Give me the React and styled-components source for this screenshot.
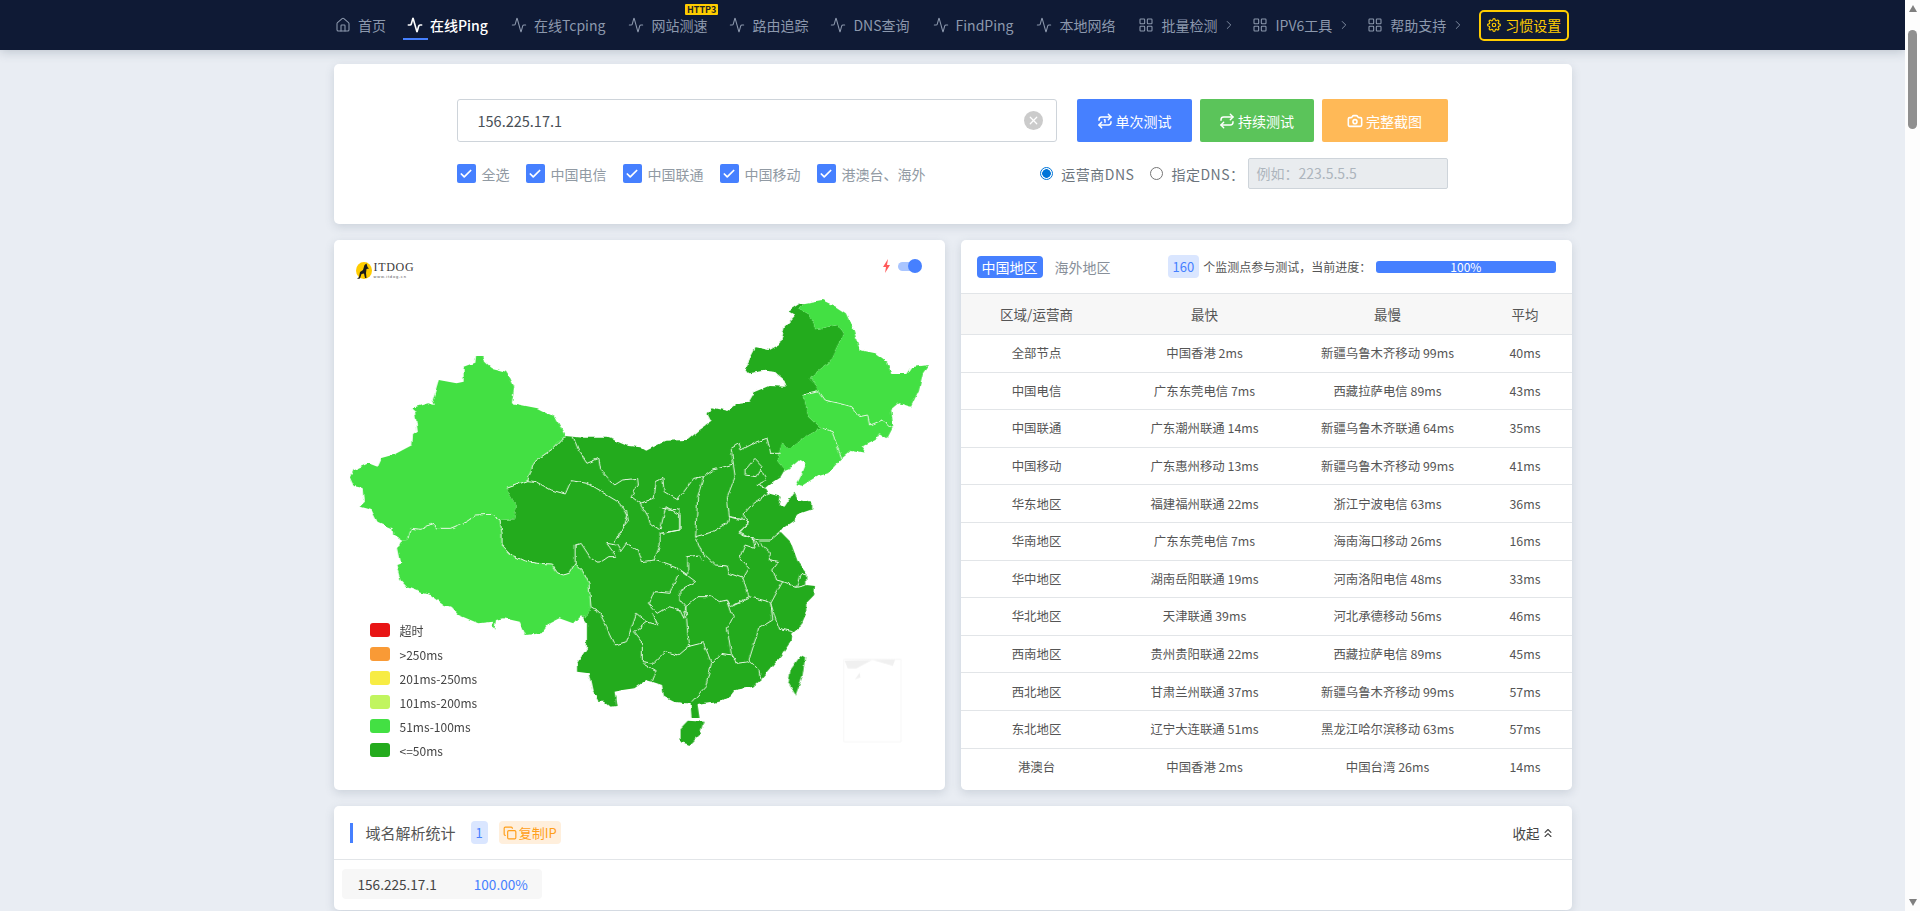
import React from 'react';
import styled, { createGlobalStyle } from 'styled-components';
import {
  Home, Activity, LayoutGrid, ChevronRight, Repeat, Repeat1, Camera, Check, Copy, ChevronsUp, X,
} from 'lucide-react';
import { FiSettings } from 'react-icons/fi';

const GlobalStyle = createGlobalStyle`
  html, body { margin: 0; height: 100%; overflow: hidden; }
  body {
    font-family: "Noto Sans CJK SC", "Noto Sans", sans-serif;
    background: #e9edf3;
    color: #555;
  }
  #root { height: 100%; }
`;

const Shell = styled.div`
  display: flex;
  height: 911px;
  overflow: hidden;
`;

const Page = styled.div`
  flex: 1;
  min-width: 0;
  overflow: hidden;
`;

const ScrollRail = styled.div`
  width: 15px;
  background: #fdfdfd;
  display: flex;
  flex-direction: column;
  align-items: center;
  justify-content: space-between;
  padding: 5px 0;
  box-sizing: border-box;
`;

const ScrollTrack = styled.div`
  flex: 1;
  width: 100%;
  padding-top: 18px;
  box-sizing: border-box;
  display: flex;
  justify-content: center;
`;

const ScrollThumb = styled.div`
  width: 9px;
  height: 99px;
  border-radius: 5px;
  background: #8f8f8f;
`;

const ScrollArrow = styled.div`
  width: 0;
  height: 0;
  border-left: 4.5px solid transparent;
  border-right: 4.5px solid transparent;
  ${({ $down }) => ($down ? 'border-top: 7px solid #7f7f7f;' : 'border-bottom: 7px solid #7f7f7f;')}
`;

const Nav = styled.nav`
  height: 50px;
  background: #0f1a35;
  box-shadow: 0 2px 10px rgba(60, 80, 100, .25);
  display: flex;
  align-items: center;
  padding-left: 335px;
  box-sizing: border-box;
`;

const NavItem = styled.div`
  position: relative;
  display: flex;
  align-items: center;
  gap: 7px;
  height: 50px;
  margin-right: ${({ $after }) => $after}px;
  font-size: 14px;
  white-space: nowrap;
  color: ${({ $active }) => ($active ? '#fff' : '#8c98ad')};
  font-weight: ${({ $active }) => ($active ? 500 : 400)};
  ${({ $active }) => $active && `
    &::after {
      content: '';
      position: absolute;
      left: -4px;
      top: 38px;
      width: 25px;
      height: 2px;
      background: #4680ff;
    }
  `}
`;

const HotTag = styled.span`
  position: absolute;
  top: 4px;
  right: -11px;
  height: 11px;
  padding: 0 2px;
  background: #ffcc00;
  color: #222;
  font-size: 9px;
  line-height: 11px;
  font-weight: 700;
  border-radius: 1px;
`;

const MoreArrow = styled(ChevronRight)`
  margin-left: -2px;
`;

const PrefButton = styled.div`
  display: flex;
  align-items: center;
  gap: 4px;
  width: 90px;
  height: 31px;
  box-sizing: border-box;
  justify-content: center;
  border: 2px solid #ffcc00;
  border-radius: 5px;
  color: #ffcc00;
  font-size: 14px;
`;

const Container = styled.main`
  width: 1238px;
  margin: 14px auto 0;
  display: flex;
  flex-direction: column;
  gap: 16px;
`;

const Card = styled.section`
  position: relative;
  background: #fff;
  border-radius: 5px;
  box-shadow: 0 3px 10px rgba(70, 90, 110, .18);
  overflow: hidden;
`;

const SearchCard = styled(Card)`
  height: 160px;
  padding: 35px 124px 0 123px;
  box-sizing: border-box;
  display: flex;
  flex-direction: column;
  gap: 16px;
`;

const SearchRow = styled.div`
  display: flex;
  align-items: center;
`;

const TargetBox = styled.div`
  width: 600px;
  height: 43px;
  box-sizing: border-box;
  border: 1px solid #ced4da;
  border-radius: 3px;
  margin-right: 20px;
  padding: 0 13px 0 20px;
  display: flex;
  align-items: center;
  justify-content: space-between;
  font-size: 14.5px;
  color: #495057;
`;

const ClearDot = styled.span`
  width: 19px;
  height: 19px;
  border-radius: 50%;
  background: #cbcbcb;
  color: #fff;
  display: flex;
  align-items: center;
  justify-content: center;
`;

const ActionButton = styled.div`
  width: ${({ $w }) => $w}px;
  height: 43px;
  margin-right: 8px;
  border-radius: 2px;
  background: ${({ $bg }) => $bg};
  color: #fff;
  font-size: 14px;
  display: flex;
  align-items: center;
  justify-content: center;
  gap: 3px;
  &:last-child { margin-right: 0; }
`;

const OptionRow = styled.div`
  display: flex;
  align-items: center;
  height: 31px;
`;

const CheckList = styled.div`
  display: flex;
  align-items: center;
  margin-right: auto;
`;

const CheckItem = styled.label`
  display: flex;
  align-items: center;
  gap: 6px;
  margin-right: 16px;
  font-size: 14px;
  color: #919aa3;
`;

const CheckMark = styled.span`
  width: 19px;
  height: 19px;
  border-radius: 2px;
  background: #4680ff;
  color: #fff;
  display: flex;
  align-items: center;
  justify-content: center;
`;

const RadioItem = styled.label`
  display: flex;
  align-items: center;
  gap: 8px;
  margin-right: ${({ $last }) => ($last ? 3 : 16)}px;
  font-size: 14px;
  letter-spacing: .5px;
  color: #6c757d;
  white-space: nowrap;
`;

const RadioDot = styled.span`
  width: 13px;
  height: 13px;
  box-sizing: border-box;
  border-radius: 50%;
  border: 1px solid ${({ $on }) => ($on ? '#0075d9' : '#767676')};
  background: ${({ $on }) => ($on ? 'radial-gradient(circle, #0075d9 0 4px, #fff 4.6px)' : '#fff')};
`;

const DnsInput = styled.div`
  width: 200px;
  height: 31px;
  box-sizing: border-box;
  border: 1px solid #ced4da;
  border-radius: 2px;
  background: #e9ecef;
  color: #adb5bd;
  font-size: 14px;
  line-height: 29px;
  padding-left: 8px;
`;

const Columns = styled.div`
  display: grid;
  grid-template-columns: 611px 611px;
  gap: 16px;
`;

const MapCard = styled(Card)`
  height: 550px;
`;

const MapSvg = styled.svg`
  display: block;
  width: 611px;
  height: 550px;
`;

const Logo = styled.div`
  position: absolute;
  left: 22px;
  top: 21px;
  display: flex;
  align-items: center;
  gap: 1px;
`;

const LogoText = styled.div`
  font-family: "Liberation Serif", serif;
  color: #3a3a3a;
  line-height: 1;
  font-size: 12px;
  letter-spacing: .7px;
`;

const LogoSub = styled.div`
  font-family: "Liberation Sans", sans-serif;
  font-size: 4px;
  letter-spacing: .8px;
  color: #555;
  margin-top: 1px;
`;

const SpeedSwitch = styled.div`
  position: absolute;
  right: 24px;
  top: 19px;
  display: flex;
  align-items: center;
  gap: 7px;
`;

const SwitchTrack = styled.div`
  position: relative;
  width: 23px;
  height: 9px;
  border-radius: 5px;
  background: #a9c5ff;
  &::after {
    content: '';
    position: absolute;
    right: -1px;
    top: -3px;
    width: 14px;
    height: 14px;
    border-radius: 50%;
    background: #4680ff;
  }
`;

const Legend = styled.ul`
  position: absolute;
  left: 36px;
  top: 378px;
  margin: 0;
  padding: 0;
  list-style: none;
  display: flex;
  flex-direction: column;
`;

const LegendItem = styled.li`
  display: flex;
  align-items: center;
  gap: 10px;
  height: 24px;
  font-size: 12px;
  color: #444;
`;

const Swatch = styled.span`
  width: 20px;
  height: 14px;
  border-radius: 3px;
  background: ${({ $color }) => $color};
`;

const StatsCard = styled(Card)`
  height: 550px;
`;

const StatsTop = styled.div`
  height: 54px;
  box-sizing: border-box;
  padding: 0 16px;
  display: flex;
  align-items: center;
  border-bottom: 1px solid #e2e5e8;
`;

const AreaTab = styled.span`
  height: 22px;
  line-height: 22px;
  padding: 0 5px;
  margin-right: 7px;
  border-radius: 4px;
  font-size: 14px;
  background: ${({ $active }) => ($active ? '#4680ff' : 'transparent')};
  color: ${({ $active }) => ($active ? '#fff' : '#888f99')};
`;

const CountBadge = styled.span`
  height: 23px;
  line-height: 23px;
  padding: 0 5px;
  margin-left: ${({ $offset }) => $offset || 0}px;
  border-radius: 4px;
  background: #dae6ff;
  color: #4680ff;
  font-size: 13px;
`;

const ProgressText = styled.span`
  font-size: 12px;
  color: #555;
  margin: 0 5px 0 4px;
  white-space: nowrap;
`;

const ProgressBar = styled.div`
  flex: 1;
  height: 12px;
  line-height: 12px;
  background: #4680ff;
  border-radius: 3px;
  color: #fff;
  font-size: 12px;
  text-align: center;
`;

const StatsRow = styled.div`
  display: grid;
  grid-template-columns: 152px 184px 182px 93px;
  align-items: center;
  height: ${({ $head }) => ($head ? 41 : 37.6)}px;
  box-sizing: border-box;
  border-bottom: 1px solid #e2e5e8;
  background: ${({ $head }) => ($head ? '#f7f7f7' : '#fff')};
  font-size: ${({ $head }) => ($head ? 13.5 : 12.4)}px;
  color: #555;
  text-align: center;
  white-space: nowrap;
  &:last-child { border-bottom: 0; }
`;

const ResolveCard = styled(Card)`
  height: 104px;
`;

const ResolveHead = styled.div`
  height: 54px;
  box-sizing: border-box;
  padding: 0 16px;
  border-bottom: 1px solid #e2e5e8;
  display: flex;
  align-items: center;
`;

const ResolveTitle = styled.h5`
  margin: 0 15px 0 0;
  padding-left: 13px;
  height: 20px;
  line-height: 20px;
  border-left: 3px solid #4680ff;
  font-size: 15px;
  font-weight: 400;
  color: #555;
`;

const CopyTag = styled.span`
  margin-left: 11px;
  height: 23px;
  padding: 0 4px;
  border-radius: 4px;
  background: #ffefdc;
  color: #ff9f1a;
  font-size: 13px;
  display: flex;
  align-items: center;
  gap: 2px;
`;

const Collapse = styled.span`
  margin-left: auto;
  font-size: 13.5px;
  color: #444;
  display: flex;
  align-items: center;
  gap: 1px;
  margin-right: 1px;
`;

const IpPill = styled.div`
  width: 200px;
  height: 30px;
  margin: 9px 0 0 8px;
  padding-left: 16px;
  box-sizing: border-box;
  background: #f7f7f7;
  border-radius: 4px;
  display: flex;
  align-items: center;
  font-size: 13.6px;
  color: #444;
`;

const IpRate = styled.span`
  margin-left: 37px;
  color: #4680ff;
`;

const navItems = [
  { label: '首页', icon: Home, after: 21 },
  { label: '在线Ping', icon: Activity, active: true, after: 23 },
  { label: '在线Tcping', icon: Activity, after: 23 },
  { label: '网站测速', icon: Activity, hot: true, after: 22 },
  { label: '路由追踪', icon: Activity, after: 22 },
  { label: 'DNS查询', icon: Activity, after: 23 },
  { label: 'FindPing', icon: Activity, after: 23 },
  { label: '本地网络', icon: Activity, after: 23 },
  { label: '批量检测', icon: LayoutGrid, more: true, after: 16 },
  { label: 'IPV6工具', icon: LayoutGrid, more: true, after: 16 },
  { label: '帮助支持', icon: LayoutGrid, more: true, after: 14 },
];

const legend = [
  ['超时', '#e81515'],
  ['>250ms', '#f99a36'],
  ['201ms-250ms', '#f7ec44'],
  ['101ms-200ms', '#c1f55f'],
  ['51ms-100ms', '#43e043'],
  ['<=50ms', '#23ab1d'],
];

const rows = [
  ['全部节点', '中国香港 2ms', '新疆乌鲁木齐移动 99ms', '40ms'],
  ['中国电信', '广东东莞电信 7ms', '西藏拉萨电信 89ms', '43ms'],
  ['中国联通', '广东潮州联通 14ms', '新疆乌鲁木齐联通 64ms', '35ms'],
  ['中国移动', '广东惠州移动 13ms', '新疆乌鲁木齐移动 99ms', '41ms'],
  ['华东地区', '福建福州联通 22ms', '浙江宁波电信 63ms', '36ms'],
  ['华南地区', '广东东莞电信 7ms', '海南海口移动 26ms', '16ms'],
  ['华中地区', '湖南岳阳联通 19ms', '河南洛阳电信 48ms', '33ms'],
  ['华北地区', '天津联通 39ms', '河北承德移动 56ms', '46ms'],
  ['西南地区', '贵州贵阳联通 22ms', '西藏拉萨电信 89ms', '45ms'],
  ['西北地区', '甘肃兰州联通 37ms', '新疆乌鲁木齐移动 99ms', '57ms'],
  ['东北地区', '辽宁大连联通 51ms', '黑龙江哈尔滨移动 63ms', '57ms'],
  ['港澳台', '中国香港 2ms', '中国台湾 26ms', '14ms'],
];

const XINJIANG = '367,348 388,348 392,365 410,385 445,395 456,415 466,440 460,490 525,505 570,532 595,588 585,600 565,625 535,650 515,668 500,722 447,745 458,770 472,800 465,838 430,840 410,823 370,825 345,845 305,865 270,865 260,850 230,868 205,865 195,900 182,902 160,885 158,865 120,845 105,810 75,800 88,785 85,745 60,738 50,712 60,690 97,670 120,680 130,655 160,645 208,615 210,585 222,575 215,515 205,505 248,490 265,495 260,480 275,420 320,430 338,425 338,380 365,368';
const TIBET = '430,840 435,880 435,915 460,945 490,962 525,970 560,972 575,998 590,1005 605,1000 620,970 640,995 655,1030 660,1100 648,1135 635,1125 615,1150 580,1135 555,1150 535,1180 495,1185 480,1145 440,1135 420,1140 415,1170 410,1145 375,1150 345,1135 325,1125 305,1100 290,1095 255,1065 235,1060 195,1042 178,1020 168,975 180,970 172,925 182,902 195,900 205,865 230,868 260,850 270,865 305,865 345,845 370,825 410,823';
const NORTHEAST = '1198,190 1245,180 1280,200 1305,220 1325,270 1340,330 1380,340 1410,365 1420,402 1458,402 1470,382 1515,375 1500,400 1490,450 1470,500 1440,490 1420,510 1425,560 1410,595 1390,580 1380,600 1345,620 1355,638 1320,630 1295,655 1260,700 1230,710 1190,740 1180,735 1195,700 1205,670 1190,660 1170,680 1150,690 1130,660 1145,605 1160,628 1190,600 1240,565 1210,530 1198,465 1225,460 1232,440 1215,412 1262,372 1270,350 1300,280 1285,255 1228,268 1215,225 1185,205';
const MAINLAND = '595,588 640,593 700,593 730,605 755,618 785,622 800,632 850,602 905,600 935,570 965,545 955,522 965,502 1005,513 1030,490 1060,485 1075,455 1110,438 1155,440 1150,420 1125,395 1100,392 1060,400 1050,385 1078,322 1110,330 1140,310 1150,260 1178,225 1160,212 1190,190 1198,190 1185,205 1215,225 1228,268 1285,255 1300,280 1270,350 1262,372 1215,412 1232,440 1225,460 1198,465 1210,530 1240,565 1190,600 1160,628 1145,605 1130,660 1150,690 1140,710 1115,730 1100,745 1108,760 1140,770 1135,795 1150,800 1175,755 1185,780 1220,788 1220,808 1190,820 1175,840 1150,860 1140,875 1165,905 1185,970 1205,1000 1205,1035 1227,1038 1225,1065 1205,1090 1205,1120 1190,1160 1170,1180 1168,1200 1140,1250 1090,1320 1070,1340 1025,1350 1010,1370 985,1385 945,1392 930,1395 935,1435 915,1435 912,1390 900,1390 870,1385 845,1370 840,1335 815,1325 800,1320 770,1345 740,1350 720,1355 725,1398 710,1400 695,1385 680,1385 665,1355 655,1300 625,1295 625,1270 650,1225 650,1150 635,1125 648,1135 660,1100 655,1030 640,995 620,970 605,1000 590,1005 575,998 560,972 525,970 490,962 460,945 435,915 435,880 430,840 465,838 472,800 458,770 447,745 500,722 515,668 535,650 565,625 585,600';
const TAIWAN = '1190,1248 1202,1255 1195,1310 1178,1365 1160,1330 1165,1290';
const HAINAN = '905,1442 945,1445 935,1485 910,1515 887,1505 887,1465';

const BORDERS_UPPER = [
  '1198,465 1235,455 1250,480 1290,490 1320,500 1340,530 1360,525 1365,555 1395,540 1425,565',
  '1245,565 1270,575 1290,640 1295,655',
  '615,590 630,635 650,670 680,655 685,690 700,710 720,735 740,720 778,715 780,735 762,770 785,790 820,775 825,725 842,715 845,755 880,780 920,715 945,710 970,690 1020,672 1015,625 1035,610 1040,630 1080,605 1105,595 1115,640 1140,640',
  '500,722 520,725 560,750 595,762 610,722 650,730 700,765 735,790 752,830 745,855 728,895',
  '785,790 805,830 810,850 835,870 850,800 885,825 885,870 840,880',
  '945,710 930,770 925,890',
  '1020,672 1025,710 1005,770 1010,830 1045,835',
  '1050,690 1075,655 1095,680 1080,710 1050,705 1050,690',
  '1090,690 1105,720 1080,735 1100,745',
  '1108,760 1070,790 1045,825 1060,850 1035,875 1070,895 1085,900 1115,900 1140,875',
  '447,745 500,722 515,668 535,650 565,625 585,600 595,588',
  '200,895 205,865 230,868 260,850 270,865 305,865 345,845 370,825 410,823 430,840 435,880 435,915 460,945 490,962 525,970 560,972 575,998 590,1005 605,1000 620,970 640,995 655,1030 660,1100',
];

const BORDERS_LOWER = [
  '620,190 620,135 635,130 660,175 680,190 705,170 725,170 700,130 725,135 735,155 750,130 780,150 790,185 820,180 880,205',
  '820,180 835,135 835,100 885,90 885,30 838,25',
  '750,30 755,65 730,100 720,130',
  '925,110 940,155 975,195 1005,198 1010,220 1045,235 1060,290 1020,315',
  '925,110 970,95 1005,70 1010,50 1060,65 1035,100 1070,115 1085,140',
  '1070,115 1075,145 1050,135 1035,175 1060,205 1045,235',
  '1085,125 1110,155 1115,180 1135,185 1120,210 1130,240 1145,245',
  '1145,245 1115,310 1125,350 1135,385 1170,395',
  '1060,290 1110,305 1115,310',
  '1145,245 1180,262 1205,255',
  '1180,262 1190,220 1205,225',
  '880,205 925,245 885,270 885,300 900,320 930,290 965,290 985,305 1005,300 1015,320 1060,295',
  '880,205 905,225 905,170 935,165 945,185',
  '880,225 860,280 820,275 808,310 830,340 858,320 885,330 895,355 900,320',
  '660,320 680,335 700,380 722,435 750,425 775,340 800,365 830,375 815,340',
  '805,365 770,395 790,425 790,485 820,490 850,455 880,465 905,440 945,428 965,490',
  '900,320 905,400 910,440',
  '1005,300 1020,350 1005,385 1015,460 1030,490 1060,485',
  '965,490 950,560 915,605',
  '965,490 990,460 1015,465 1030,490',
  '1115,310 1120,360 1085,385 1060,480 1085,510 1090,540',
  '790,490 825,515 815,545',
];

const ChinaMap = () => (
  <MapSvg viewBox="10 0 1546 1650" preserveAspectRatio="none">
    <defs>
      <filter id="roughEdge" filterUnits="userSpaceOnUse" x="10" y="0" width="1546" height="1650" colorInterpolationFilters="sRGB">
        <feTurbulence type="fractalNoise" baseFrequency="0.05" numOctaves="2" seed="4" />
        <feDisplacementMap in="SourceGraphic" scale="11" xChannelSelector="R" yChannelSelector="G" />
      </filter>
    </defs>
    <g filter="url(#roughEdge)">
      <polygon points={MAINLAND} fill="#23ab1d" />
      <g fill="#43e043">
        <polygon points={XINJIANG} />
        <polygon points={TIBET} />
        <polygon points={NORTHEAST} />
      </g>
      <g fill="none" stroke="#e6f8e4" strokeWidth="1">
        {BORDERS_UPPER.map((b) => <polyline key={b} points={b} vectorEffect="non-scaling-stroke" />)}
        <g transform="translate(0 780)">
          {BORDERS_LOWER.map((b) => <polyline key={b} points={b} vectorEffect="non-scaling-stroke" />)}
        </g>
      </g>
      <polygon points={TAIWAN} fill="#23ab1d" />
      <polygon points={HAINAN} fill="#23ab1d" />
    </g>
    <g fill="#f0f0f0">
      <polygon points="1302,1262 1430,1258 1424,1278 1372,1260 1332,1285 1310,1285" />
      <polygon points="1328,1318 1340,1298 1342,1312" />
    </g>
    <rect x="1300" y="1258" width="145" height="247" fill="none" stroke="#f6f6f6" strokeWidth="1" vectorEffect="non-scaling-stroke" />
  </MapSvg>
);

const DogMark = () => (
  <svg width="17" height="17" viewBox="0 0 17 17">
    <ellipse cx="8" cy="8.5" rx="8" ry="8.5" fill="#ffcc00" />
    <path d="M10.5 1.5 L11.5 5 L13 6.5 L10.5 7 L10 11 L10.5 16 L9 16 L8 11.5 L5.5 12 L4 16.5 L1 17 L3 15 L4 10 L7 8 L8.5 3 Z" fill="#1a1a1a" />
  </svg>
);

const App = () => (
  <Shell>
    <GlobalStyle />
    <Page>
      <Nav>
        {navItems.map(({ label, icon: Icon, active, hot, more, after }) => (
          <NavItem key={label} $active={active} $after={after}>
            <Icon size={16} strokeWidth={active ? 2.4 : 1.6} />
            {label}
            {hot && <HotTag>HTTP3</HotTag>}
            {more && <MoreArrow size={14} strokeWidth={1.5} />}
          </NavItem>
        ))}
        <PrefButton>
          <FiSettings size={14} />
          习惯设置
        </PrefButton>
      </Nav>
      <Container>
        <SearchCard>
          <SearchRow>
            <TargetBox>
              156.225.17.1
              <ClearDot><X size={13} strokeWidth={2.2} /></ClearDot>
            </TargetBox>
            <ActionButton $w={115} $bg="#4680ff"><Repeat1 size={16} strokeWidth={2.2} />单次测试</ActionButton>
            <ActionButton $w={114} $bg="#5bc45a"><Repeat size={16} strokeWidth={2.2} />持续测试</ActionButton>
            <ActionButton $w={126} $bg="#ffb957"><Camera size={16} strokeWidth={2.4} />完整截图</ActionButton>
          </SearchRow>
          <OptionRow>
            <CheckList>
              {['全选', '中国电信', '中国联通', '中国移动', '港澳台、海外'].map((name) => (
                <CheckItem key={name}>
                  <CheckMark><Check size={14} strokeWidth={3} /></CheckMark>
                  {name}
                </CheckItem>
              ))}
            </CheckList>
            <RadioItem><RadioDot $on />运营商DNS</RadioItem>
            <RadioItem $last><RadioDot />指定DNS：</RadioItem>
            <DnsInput>例如：223.5.5.5</DnsInput>
          </OptionRow>
        </SearchCard>
        <Columns>
          <MapCard>
            <ChinaMap />
            <Logo>
              <DogMark />
              <div>
                <LogoText>ITDOG</LogoText>
                <LogoSub>www.itdog.cn</LogoSub>
              </div>
            </Logo>
            <SpeedSwitch>
              <svg width="9" height="14" viewBox="0 0 9 14">
                <path d="M6 0 L1 8 H4 L3 14 L8 6 H5 Z" fill="#ff5a5a" />
              </svg>
              <SwitchTrack />
            </SpeedSwitch>
            <Legend>
              {legend.map(([label, color]) => (
                <LegendItem key={label}>
                  <Swatch $color={color} />
                  {label}
                </LegendItem>
              ))}
            </Legend>
          </MapCard>
          <StatsCard>
            <StatsTop>
              <AreaTab $active>中国地区</AreaTab>
              <AreaTab>海外地区</AreaTab>
              <CountBadge $offset={45}>160</CountBadge>
              <ProgressText>个监测点参与测试，当前进度：</ProgressText>
              <ProgressBar>100%</ProgressBar>
            </StatsTop>
            <StatsRow $head>
              <span>区域/运营商</span>
              <span>最快</span>
              <span>最慢</span>
              <span>平均</span>
            </StatsRow>
            {rows.map((r) => (
              <StatsRow key={r[0]}>
                {r.map((c) => <span key={c}>{c}</span>)}
              </StatsRow>
            ))}
          </StatsCard>
        </Columns>
        <ResolveCard>
          <ResolveHead>
            <ResolveTitle>域名解析统计</ResolveTitle>
            <CountBadge>1</CountBadge>
            <CopyTag><Copy size={14} strokeWidth={2} />复制IP</CopyTag>
            <Collapse>收起<ChevronsUp size={14} /></Collapse>
          </ResolveHead>
          <IpPill>
            156.225.17.1
            <IpRate>100.00%</IpRate>
          </IpPill>
        </ResolveCard>
      </Container>
    </Page>
    <ScrollRail>
      <ScrollArrow />
      <ScrollTrack><ScrollThumb /></ScrollTrack>
      <ScrollArrow $down />
    </ScrollRail>
  </Shell>
);

export default App;
